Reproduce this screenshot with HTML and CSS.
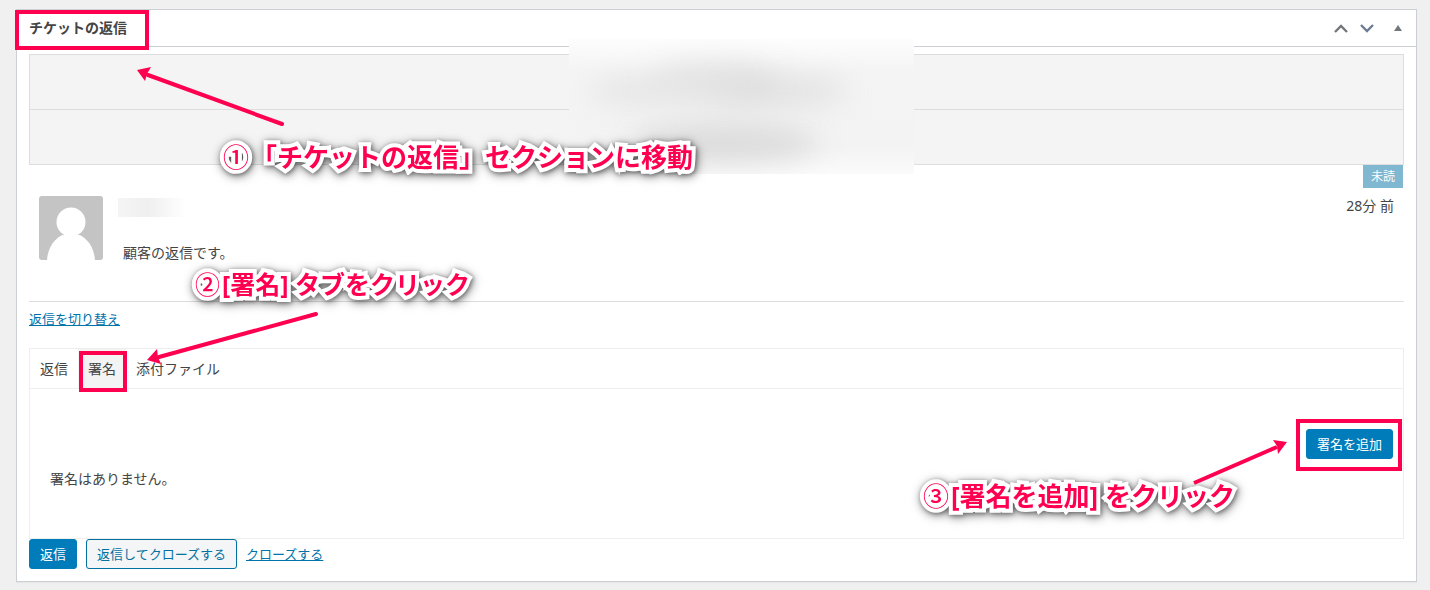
FILE: index.html
```html
<!DOCTYPE html>
<html lang="ja">
<head>
    <meta charset="UTF-8">
    <meta name="viewport" content="width=device-width, initial-scale=1.0">
    <title>チケットの返信</title>
    <link rel="stylesheet" href="styles.css">
</head>
<body>
    <section class="postbox">
        <header class="postbox-header">
            <h2 class="title">チケットの返信</h2>
            <div class="handle-actions">
                <button type="button" class="handle" aria-label="上に移動">
                    <svg width="14" height="9" viewBox="0 0 14 9"><path d="M1 8 L7 2 L13 8" fill="none" stroke="#72777c" stroke-width="2.4"/></svg>
                </button>
                <button type="button" class="handle" aria-label="下に移動">
                    <svg width="14" height="9" viewBox="0 0 14 9"><path d="M1 1 L7 7 L13 1" fill="none" stroke="#6b7c93" stroke-width="2.4"/></svg>
                </button>
                <button type="button" class="handle toggle" aria-label="パネルを切り替え">
                    <svg width="8" height="6" viewBox="0 0 8 6"><path d="M4 0 L8 6 L0 6 Z" fill="#72777c"/></svg>
                </button>
            </div>
        </header>

        <div class="inside">
            <div class="history">
                <div class="history-row"></div>
                <div class="history-row"></div>
            </div>

            <article class="reply">
                <span class="badge">未読</span>
                <svg class="avatar" width="64" height="64" viewBox="0 0 64 64">
                    <rect width="64" height="64" rx="3" fill="#c4c4c4"/>
                    <circle cx="32" cy="26" r="14.5" fill="#fff"/>
                    <path d="M8 64 C9 49 19 38 29 38 H35 C45 38 55 49 56 64 Z" fill="#fff"/>
                </svg>
                <div class="reply-body">
                    <div class="name-mask"></div>
                    <p class="reply-text">顧客の返信です。</p>
                </div>
                <time class="reply-time">28分 前</time>
            </article>

            <a href="#" class="toggle-replies">返信を切り替え</a>

            <div class="tabs">
                <div class="tab-list" role="tablist">
                    <button type="button" class="tab" role="tab">返信</button>
                    <button type="button" class="tab active" role="tab" aria-selected="true">署名</button>
                    <button type="button" class="tab" role="tab">添付ファイル</button>
                </div>
                <div class="tab-panel" role="tabpanel">
                    <div class="add-row">
                        <div class="add-mark"><button type="button" class="button primary">署名を追加</button></div>
                    </div>
                    <p class="empty">署名はありません。</p>
                </div>
            </div>

            <div class="actions">
                <button type="button" class="button primary">返信</button>
                <button type="button" class="button">返信してクローズする</button>
                <a href="#">クローズする</a>
            </div>
        </div>

        <!-- masked area over the history rows -->
        <div class="mask">
            <i class="smudge s1"></i>
            <i class="smudge s2"></i>
            <i class="smudge s3"></i>
            <i class="smudge s4"></i>
        </div>

        <!-- step notes -->
        <p class="note note1"><span>①</span>「チケットの返信」セクションに移動</p>
        <p class="note note2"><span>②</span>[署名] タブをクリック</p>
        <p class="note note3"><span>③</span>[署名を追加] をクリック</p>

        <svg class="arrow arrow1" width="150" height="64" viewBox="0 0 150 64">
            <path d="M146 58 L12 9" fill="none" stroke="#ff0050" stroke-width="4" stroke-linecap="round"/>
            <path d="M1 4 L15 1 L11 8 L9 15 Z" fill="#ff0050"/>
        </svg>
        <svg class="arrow arrow2" width="174" height="54" viewBox="0 0 174 54">
            <path d="M169 3 L12 46" fill="none" stroke="#ff0050" stroke-width="4" stroke-linecap="round"/>
            <path d="M0 49 L10 38 L11 46 L14 53 Z" fill="#ff0050"/>
        </svg>
        <svg class="arrow arrow3" width="96" height="48" viewBox="0 0 96 48">
            <path d="M1 44 L84 8" fill="none" stroke="#ff0050" stroke-width="4"/>
            <path d="M94 3 L80 1 L84 7 L85 15 Z" fill="#ff0050"/>
        </svg>
    </section>
</body>
</html>
```
FILE: styles.css
```css
* {
    box-sizing: border-box;
}

body {
    margin: 0;
    padding: 9px 13px 8px 16px;
    background: #f0f0f0;
    color: #444;
    font-family: "Noto Sans", "Noto Sans CJK JP", sans-serif;
    font-size: 14px;
    line-height: 20px;
}

h2,
p {
    margin: 0;
}

a {
    color: #0073aa;
    font-size: 13px;
}

button {
    font-family: inherit;
    color: inherit;
    cursor: pointer;
}

.postbox {
    position: relative;
    background: #fff;
    border: 1px solid #ccd0d4;
    box-shadow: 0 1px 1px rgba(0, 0, 0, 0.04);
}

.postbox-header {
    display: flex;
    align-items: center;
    justify-content: space-between;
    height: 37px;
    padding: 0 14px 0 12px;
    border-bottom: 1px solid #ccd0d4;
}

.title {
    position: relative;
    font-size: 14px;
    font-weight: 600;
}

.handle-actions {
    display: flex;
    align-items: center;
    gap: 12px;
}

.handle {
    display: flex;
    padding: 0;
    border: 0;
    background: none;
}

.toggle {
    margin-left: 8px;
}

/* pink frames round the things to click */
.title::after,
.tab.active::after,
.add-mark {
    box-sizing: border-box;
    border: 4px solid #ff0050;
}

.title::after {
    content: "";
    position: absolute;
    left: -14px;
    top: -8px;
    width: 134px;
    height: 40px;
}

.inside {
    padding: 7px 12px 12px;
}

.history {
    border: 1px solid #ddd;
    background: #f4f4f4;
}

.history-row {
    height: 54px;
}

.history-row + .history-row {
    height: 55px;
    border-top: 1px solid #ddd;
}

.reply {
    position: relative;
    display: flex;
    align-items: flex-start;
    height: 137px;
    padding: 31px 10px 0;
    border-bottom: 1px solid #ddd;
}

.badge {
    position: absolute;
    top: 0;
    right: 1px;
    padding: 1px 8px 0;
    background: #7fb8d0;
    color: #fff;
    font-size: 12px;
    line-height: 22px;
}

.reply-body {
    flex: 1;
    padding: 2px 0 0 15px;
}

.name-mask {
    width: 68px;
    height: 19px;
    background: linear-gradient(90deg, #f5f5f5, #efefef 45%, #fff);
}

.reply-text {
    padding: 26px 0 0 5px;
}

.toggle-replies {
    display: block;
    width: max-content;
    margin: 7px 0 19px;
}

.tabs {
    border: 1px solid #eee;
}

.tab-list {
    display: flex;
    height: 40px;
    border-bottom: 1px solid #eee;
}

.tab {
    position: relative;
    padding: 0 10px 2px;
    border: 0;
    background: none;
    font-size: 14px;
}

.tab.active {
    background: #f3f3f3;
}

.tab.active::after {
    content: "";
    position: absolute;
    left: 1px;
    top: 2px;
    width: 48px;
    height: 41px;
}

.tab-panel {
    padding: 30px 1px 48px;
}

.add-row {
    display: flex;
    justify-content: flex-end;
}

.add-mark {
    height: 52px;
    padding: 6px 5px 6px 6px;
}

.empty {
    padding: 0 19px 1px;
    margin-top: -2px;
}

.actions {
    display: flex;
    align-items: center;
    gap: 9px;
}

.button {
    height: 30px;
    padding: 0 10px 2px;
    border: 1px solid #0071a1;
    border-radius: 3px;
    background: #f3f5f6;
    color: #0071a1;
    font-size: 13px;
}

.button.primary {
    border-color: #007cba;
    background: #007cba;
    color: #fff;
}

.mask {
    position: absolute;
    left: 552px;
    top: 29px;
    width: 345px;
    height: 135px;
    overflow: hidden;
    background: linear-gradient(#fdfdfd, #f4f4f4 24%, #f3f3f3 80%, #fbfbfb);
}

.smudge {
    position: absolute;
    border-radius: 50%;
    background: #d9d9d9;
    filter: blur(14px);
}

.s1 {
    left: 20px;
    top: 40px;
    width: 80px;
    height: 24px;
    opacity: 0.6;
}

.s2 {
    left: 80px;
    top: 22px;
    width: 130px;
    height: 44px;
    opacity: 0.6;
}

.s3 {
    left: 150px;
    top: 38px;
    width: 130px;
    height: 28px;
    opacity: 0.7;
}

.s4 {
    left: 60px;
    top: 84px;
    width: 190px;
    height: 40px;
    opacity: 0.9;
}

.note {
    position: absolute;
    color: #ff0050;
    font-size: 26px;
    font-weight: 700;
    line-height: 36px;
    white-space: nowrap;
    -webkit-text-stroke: 8px #fff;
    paint-order: stroke fill;
    stroke-linejoin: round;
    filter: drop-shadow(1px 1px 2px rgba(0, 0, 0, 0.35)) drop-shadow(1px 2px 5px rgba(0, 0, 0, 0.5));
}

.note span {
    margin-right: 2px;
    font-weight: 500;
}

.note1 {
    left: 206px;
    top: 129px;
}

.note2 {
    left: 178px;
    top: 256px;
    font-size: 25px;
}

.note3 {
    right: 181px;
    top: 468px;
}

.arrow {
    position: absolute;
}

.arrow1 {
    left: 119px;
    top: 56px;
}

.arrow2 {
    left: 130px;
    top: 301px;
}

.arrow3 {
    right: 127px;
    top: 429px;
}
```
